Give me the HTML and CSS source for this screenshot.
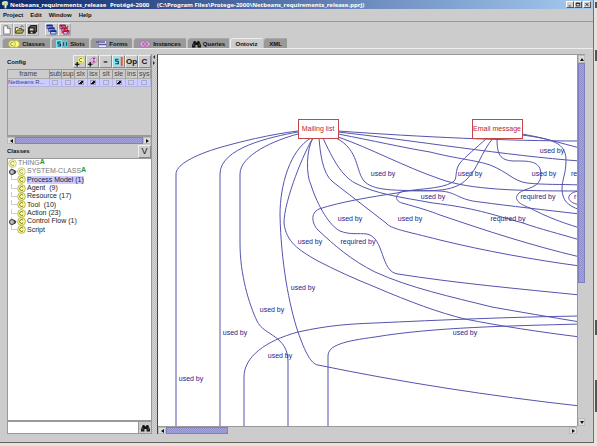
FILE: index.html
```html
<!DOCTYPE html>
<html lang="en">
<head>
<meta charset="utf-8">
<title>Netbeans_requirements_release Protégé-2000</title>
<link rel="stylesheet" href="styles.css">
</head>
<body>
<svg class="defs" aria-hidden="true">
  <symbol id="cls" viewBox="0 0 10 10"><circle cx="5" cy="5" r="4.3" fill="#ffffa0" stroke="#a3a33c" stroke-width=".9"/><path d="M6.9 3.7A2.2 2.2 0 1 0 6.9 6.3" fill="none" stroke="#77771a" stroke-width="1.1"/></symbol>
  <symbol id="find" viewBox="0 0 10 9"><path d="M2 1h2v1.500h2V1h2l2 5v2.500H6.200V5.500H3.800v3H0V6z" fill="#111"/><path d="M2 4v3M8 4v3" stroke="#999" stroke-width=".6"/></symbol>
</svg>
<div class="desktop">
<div class="window">
  <header class="title">
    <svg class="app-icon" viewBox="0 0 9 9"><path d="M4 9V6L1 5V2l2-1.500h3L8 2v3L6 6v3z" fill="#9fd08a"/><path d="M2 2h2v2H2zM5 1h2v2H5zM5 4h1v4H4z" fill="#e9f4c8"/></svg>
    <span class="t-name">Netbeans_requirements_release</span>
    <span class="t-app">Protégé-2000</span>
    <span class="t-path">(C:\Program Files\Protege-2000\Netbeans_requirements_release.pprj)</span>
    <span class="controls">
      <button aria-label="Minimize"><svg viewBox="0 0 8 7"><path d="M2 5.500h3" stroke="#000"/></svg></button>
      <button aria-label="Maximize"><svg viewBox="0 0 8 7"><path d="M1.500 1.500h5v4h-5zM1.500 2h5" fill="none" stroke="#000"/></svg></button>
      <button class="close" aria-label="Close"><svg viewBox="0 0 8 7"><path d="M2 1.500l4 4M6 1.500l-4 4" stroke="#000"/></svg></button>
    </span>
  </header>
  <nav class="menu"><button>Project</button><button>Edit</button><button>Window</button><button>Help</button></nav>
  <div class="toolbar">
    <button aria-label="New"><svg viewBox="0 0 12 12"><path d="M3 2h4l3 3v6H3z" fill="#fff" stroke="#555" stroke-width=".8"/><path d="M7 2v3h3" fill="none" stroke="#555" stroke-width=".8"/><path d="M1 1h2v2" fill="#ee4"/></svg></button>
    <button aria-label="Open"><svg viewBox="0 0 12 12"><path d="M1.500 10V4h3l1 1h3v2" fill="#ffffb0" stroke="#333" stroke-width=".9"/><path d="M1.500 10l2-3.500H11L9 10z" fill="#b5b540" stroke="#333" stroke-width=".9"/><path d="M7 3q2-2 3.500 0" fill="none" stroke="#333" stroke-width=".8"/></svg></button>
    <button aria-label="Save"><svg viewBox="0 0 12 12"><path d="M4 1h7v7L9 10.500H1V4z" fill="#222"/><path d="M3 5h4v2H3zM4 8.500h2V10H4z" fill="#d8d8c0"/><path d="M4 3h5v5" fill="none" stroke="#999" stroke-width=".7"/></svg></button>
    <button class="gap" aria-label="Cascade windows"><svg viewBox="0 0 12 12"><path d="M1 1h6v4H1zM3 4h6v4H3zM5 7h6v4H5z" fill="#c7cdf4" stroke="#223a9c" stroke-width=".9"/><path d="M1 1.800h6M3 4.800h6M5 7.800h6" stroke="#1a2a88" stroke-width="1.600"/></svg></button>
    <button aria-label="Close windows"><svg viewBox="0 0 12 12"><path d="M1 1h6v4H1zM3 4h6v4H3zM5 7h6v4H5z" fill="#c7cdf4" stroke="#a0204c" stroke-width=".9"/><path d="M1 1.800h6M3 4.800h6M5 7.800h6" stroke="#a01840" stroke-width="1.600"/><path d="M3 10l7-8M2 2l8 8" stroke="#d02040" stroke-width="1.200"/></svg></button>
  </div>
  <div class="tabs" role="tablist">
    <button role="tab" class="w1"><svg class="tab-icon" viewBox="0 0 12 8"><circle cx="8" cy="4" r="3.400" fill="#ffff8c" stroke="#b5b530"/><circle cx="4" cy="4" r="3.400" fill="#ffffa8" stroke="#b5b530"/><path d="M5.300 2.900A1.600 1.600 0 1 0 5.300 5.100" fill="none" stroke="#80801c" stroke-width=".8"/></svg>Classes</button>
    <button role="tab" class="w2"><svg class="tab-icon" viewBox="0 0 12 8"><path d="M0 0h6v8H0z" fill="#7fe5ee"/><path d="M4.700 2H2v2h2.500v2H1.500" fill="none" stroke="#035" stroke-width="1.100"/><path d="M7.500 0v8M10.500 0v8" stroke="#4fd4e0" stroke-width="1.800"/><path d="M7.500 2v4M10.500 2v4" stroke="#068"/></svg>Slots</button>
    <button role="tab" class="w3"><svg class="tab-icon" viewBox="0 0 12 8"><path d="M3.500.5h8v7h-8z" fill="#e6e6f4" stroke="#7777a8" stroke-width=".7"/><path d="M1 2h9M3.500 4.500h8" stroke="#5c5ca5" stroke-width="1.400"/></svg>Forms</button>
    <button role="tab" class="w4"><svg class="tab-icon" viewBox="0 0 12 8"><path d="M8 .5L11.500 4 8 7.500 4.500 4zM4 .5L7.500 4 4 7.500.5 4z" fill="#f3b7ef" stroke="#a85aa4" stroke-width=".8"/><path d="M4 2.500v3M8 2.500v3" stroke="#739"/></svg>Instances</button>
    <button role="tab" class="w5"><svg class="find-icon"><use href="#find"/></svg>Queries</button>
    <button role="tab" class="w6 active" aria-selected="true">Ontoviz</button>
    <button role="tab" class="w7">XML</button>
  </div>
  <main class="work">
    <section class="side">
      <div class="head">
        <h2>Config</h2>
        <button aria-label="Add class"><svg viewBox="0 0 12 12"><circle cx="7.500" cy="4.500" r="3.800" fill="#ffff9c" stroke="#c2c240" stroke-width=".8"/><path d="M9 3.300A1.900 1.900 0 1 0 9 5.700" fill="none" stroke="#77771a"/><path d="M1 9h5M3.500 6.500v5" stroke="#000" stroke-width="1.300"/></svg></button>
        <button aria-label="Add instance"><svg viewBox="0 0 12 12"><path d="M7.500.5l4 4-4 4-4-4z" fill="#f6c2f2" stroke="#c07abc" stroke-width=".8"/><path d="M6.200 2.500h2.600M7.500 2.500v4M6.200 6.500h2.600" stroke="#626" stroke-width=".8"/><path d="M1 9h5M3.500 6.500v5" stroke="#000" stroke-width="1.300"/></svg></button>
        <button aria-label="Remove"><svg viewBox="0 0 12 12"><path d="M4 6.500h4" stroke="#000" stroke-width="1.200"/></svg></button>
        <button aria-label="Slots"><svg viewBox="0 0 12 12"><path d="M1 1h6.500v10H1z" fill="#82ecf5"/><path d="M6 3.500H3v2.300h2.800v2.700H2.500" fill="none" stroke="#003a60" stroke-width="1.200"/><path d="M9.500 1v10" stroke="#e2572e" stroke-width="2"/></svg></button>
        <button>Op</button>
        <button>C</button>
      </div>
      <div class="config">
        <table>
          <thead><tr><th class="frame">frame</th><th>sub</th><th>sup</th><th>slx</th><th>isx</th><th>slt</th><th>sle</th><th>ins</th><th>sys</th></tr></thead>
          <tbody><tr><td>Netbeans R...</td>
          <td><input type="checkbox" aria-label="sub"></td><td><input type="checkbox" aria-label="sup"></td><td><input type="checkbox" checked aria-label="slx"></td><td><input type="checkbox" checked aria-label="isx"></td><td><input type="checkbox" aria-label="slt"></td><td><input type="checkbox" checked aria-label="sle"></td><td><input type="checkbox" aria-label="ins"></td><td><input type="checkbox" aria-label="sys"></td></tr></tbody>
        </table>
      </div>
      <div class="hbar"><button class="left" aria-label="Scroll left"></button><span class="thumb full"></span><button class="right" aria-label="Scroll right"></button></div>
      <div class="head classes"><h2>Classes</h2><button>V</button></div>
      <ul class="tree">
        <li class="root"><svg class="node faded"><use href="#cls"/></svg><span class="dim">THING</span><b class="abs">A</b></li>
        <li class="key"><svg class="node faded"><use href="#cls"/></svg><span class="dim">SYSTEM-CLASS</span><b class="abs">A</b></li>
        <li><svg class="node"><use href="#cls"/></svg><span class="picked">Process Model (1)</span></li>
        <li><svg class="node"><use href="#cls"/></svg><span>Agent &nbsp;(9)</span></li>
        <li><svg class="node"><use href="#cls"/></svg><span>Resource (17)</span></li>
        <li><svg class="node"><use href="#cls"/></svg><span>Tool &nbsp;(10)</span></li>
        <li><svg class="node"><use href="#cls"/></svg><span>Action (23)</span></li>
        <li class="key"><svg class="node"><use href="#cls"/></svg><span>Control Flow (1)</span></li>
        <li class="last"><svg class="node"><use href="#cls"/></svg><span>Script</span></li>
      </ul>
      <form class="search"><input type="text" aria-label="Find class"><button type="button" aria-label="Find"><svg class="find-icon"><use href="#find"/></svg></button></form>
    </section>
    <div class="splitter"><svg viewBox="0 0 4 12"><path d="M3 1v4L1 3zM1 7v4l2-2z" fill="#333"/></svg></div>
    <section class="view">
      <svg class="graph">
        <g transform="translate(-158 -55)">
          <g class="edges">
            <path d="M298 131C272 134 238 142 215 149C190 157 176 166 176 174V430"/>
            <path d="M298 132C270 137 220 148 220 174V430"/>
            <path d="M298 134C275 140 240 155 240 174V243C240 275 249 304 257 321C264 336 288 335 288 362V430"/>
            <path d="M311 138C290 150 280 185 280 215C281 262 289 305 298 332C305 352 311 364 318 365C400 382 490 396 580 406"/>
            <path d="M313 138C305 150 284 200 284 223C286 242 299 250 316 260C335 270 355 279 375 287C410 302 440 313 465 319C500 326 540 332 580 337"/>
            <path d="M313 138C306 150 306 175 311 185C318 207 330 226 340 231C350 235 358 233 367 234C385 238 380 272 398 274C455 283 520 289 580 295"/>
            <path d="M319 138C320 150 322 174 333 182L386 223C391 229 405 231 440 240C485 251 535 260 580 266"/>
            <path d="M323 138C333 160 342 176 355 183C375 194 400 197 433 203C475 208 490 214 523 223C540 229 560 234 580 240"/>
            <path d="M336 138C360 150 355 172 365 182C376 192 400 190 440 191C457 192 458 200 480 202C510 206 545 210 580 214"/>
            <path d="M338 137C370 148 405 167 440 179C470 190 520 191 580 191"/>
            <path d="M338 134C375 141 400 147 430 152C458 159 475 160 490 165C508 172 513 181 527 183C545 185 560 184 580 185"/>
            <path d="M338 132C410 140 510 156 580 161"/>
            <path d="M338 131C420 137 510 141 580 141"/>
            <path d="M487 138C475 149 466 156 460 163C454 171 458 179 453 182C440 190 415 188 397 193C370 197 340 202 319 209C310 213 312 224 318 230C334 245 351 260 375 272C410 288 452 297 492 307C520 312 550 317 580 322"/>
            <path d="M493 138C481 153 478 168 467 179C453 194 425 190 404 191C396 193 393 200 402 203C420 208 430 211 440 215C490 232 530 245 580 257"/>
            <path d="M497 138C497 155 500 160 513 161C528 161 541 160 541 175C541 188 525 188 519 193C514 198 516 203 530 208C545 216 560 222 580 228"/>
            <path d="M522 134C545 138 560 143 580 148"/>
            <path d="M522 135C553 139 566 143 566 160C566 175 562 178 562 190C563 201 567 205 580 210"/>
            <path d="M580 191C566 192 564 202 580 205"/>
            <path d="M244 430V377C244 357 265 341 298 332C330 325 350 324 375 323C440 320 510 317 580 316"/>
            <path d="M328 430V356C328 345 345 341 375 337C435 327 510 326 580 324"/>
          </g>
          <g class="frames"><rect x="298.500" y="119.500" width="40" height="19"/><rect x="472.500" y="119.500" width="50" height="19"/></g>
          <g class="titles"><text x="318" y="131">Mailing list</text><text x="497" y="131">Email message</text></g>
          <g class="labels">
            <text x="552" y="153">used by</text>
            <text x="383" y="176">used by</text><text x="470" y="176">used by</text><text x="544" y="176">used by</text><text class="edge" x="571" y="176">re</text>
            <text x="433" y="199">used by</text><text x="538" y="199">required by</text><text class="edge" x="574" y="199">r</text>
            <text x="350" y="221">used by</text><text x="410" y="221">used by</text><text x="508" y="221">required by</text>
            <text x="310" y="244">used by</text><text x="358" y="244">required by</text>
            <text x="303" y="290">used by</text><text x="272" y="312">used by</text><text x="235" y="335">used by</text><text x="465" y="335">used by</text><text x="280" y="358">used by</text><text x="191" y="381">used by</text>
          </g>
        </g>
      </svg>
      <div class="vbar"><button class="up" aria-label="Scroll up"></button><span class="thumb"></span><span class="track"></span><button class="down" aria-label="Scroll down"></button></div>
      <div class="hbar"><button class="left" aria-label="Scroll left"></button><span class="thumb"></span><span class="track"></span><button class="right" aria-label="Scroll right"></button></div>
    </section>
  </main>
</div>
</div>
</body>
</html>
```

FILE: styles.css
```css
* { box-sizing: border-box; }
body { margin: 0; font: 7px/8px "Liberation Sans", Arial, sans-serif; color: #222; }
button, input { font: inherit; color: inherit; margin: 0; padding: 0; border: 0; background: none; border-radius: 0; }
svg { display: block; }
.defs { width: 0; height: 0; position: absolute; }
.desktop { min-height: 100vh; display: flex; padding: 0 3px 3px 0; background: linear-gradient(#555, #555) 100% 2px / 2px 6px no-repeat, linear-gradient(#555, #555) 100% 50px / 2px 11px no-repeat, linear-gradient(#555, #555) 100% 320px / 2px 15px no-repeat, linear-gradient(#555, #555) 100% 380px / 2px 32px no-repeat, #e6e3dc; }
.window { flex: 1; min-width: 0; display: flex; flex-direction: column; background: #ccc; border-right: 1px solid #77706a; border-bottom: 1px solid #66625c; }

.title { display: flex; align-items: center; height: 9px; padding-left: 1px; color: #fff; font: bold 6px/8px "Noto Sans", sans-serif; white-space: nowrap; background: linear-gradient(90deg, #0c276c, #a6caf0); }
.app-icon { width: 8px; height: 9px; margin-right: 1px; }
.t-name { width: 100px; }
.t-app { width: 47px; }
.controls { display: flex; margin-left: auto; padding-right: 2px; }
.controls button { width: 8px; height: 7px; background: #d4d0c8; border: 1px solid; border-color: #fff #555 #555 #fff; }
.controls svg { width: 100%; height: 100%; }
.controls .close { margin-left: 1px; }

.menu { display: flex; gap: 7px; height: 13px; padding-left: 3px; padding-bottom: 1px; align-items: center; border-bottom: 1px solid #999; }
.menu button, h2, .tabs button { font-size: 6px; font-weight: bold; color: #111; }
.toolbar { display: flex; height: 16px; padding: 1px 0; }
.toolbar button { width: 13px; height: 13px; border: 1px solid #aaa; border-left-color: #eee; border-top-color: #eee; padding: 0; }
.toolbar svg { width: 11px; height: 11px; }
.toolbar .gap { margin-left: 6px; }

.tabs { display: flex; height: 11px; padding-left: 2px; gap: 1px; align-items: flex-end; border-bottom: 1px solid #eee; }
.tabs button { display: flex; align-items: center; justify-content: center; gap: 2px; height: 10px; background: #999; border-left: 1px solid #bbb; border-top: 1px solid #aaa; border-top-left-radius: 4px; white-space: nowrap; }
.tabs .active { background: #ccc; border-color: #eee; }
.tab-icon { width: 12px; height: 8px; }
.find-icon { width: 9px; height: 8px; }
.w1 { width: 48px; } .w2 { width: 38px; } .w3 { width: 42px; } .w4 { width: 53px; } .w5 { width: 42px; } .w6 { width: 32px; } .w7 { width: 24px; }

.work { flex: 1; min-height: 0; display: grid; grid-template-columns: 145px 5px 1fr; padding: 5px 8px 8px 7px; }
.side { display: flex; flex-direction: column; min-width: 0; border-right: 1px solid #999; }
.head { display: flex; height: 15px; align-items: center; flex: none; }
.head h2 { margin: 0 auto 0 0; }
.head button { width: 13px; height: 13px; border: 1px solid; border-color: #eee #888 #888 #eee; font-weight: bold; font-size: 8px; color: #111; text-align: center; }
.head svg { width: 11px; height: 11px; }
.config { height: 67px; border: 1px solid #999; border-right: 0; }
table { width: 100%; table-layout: fixed; border-collapse: collapse; }
th, td { padding: 0; height: 8px; line-height: 7px; font-weight: normal; color: #444; text-align: center; white-space: nowrap; border-right: 1px solid #999; border-bottom: 1px solid #aaa; }
.frame { width: 41px; }
td { background: #ccccff; color: #446; border-color: #b4b4dd; }
td:first-child { text-align: left; font-size: 6px; }
td input { appearance: none; display: block; width: 6px; height: 5px; margin: 0 auto; border: 1px solid #aaaacc; }
td input:checked { border-color: #9999bb; background: linear-gradient(135deg, transparent 40%, #111 40%, #111 75%, transparent 75%); }

.hbar { display: flex; height: 8px; flex: none; background: #ccc; border-top: 1px solid #999; }
.hbar button { width: 8px; flex: none; background: #ddd; border: 1px solid #bbb; display: grid; place-items: center; }
.hbar button::before, .vbar button::before { content: ""; border: 2px solid transparent; }
.hbar .left::before { border-right: 3px solid #111; border-left: 0; }
.hbar .right::before { border-left: 3px solid #111; border-right: 0; }
.vbar .up::before { border-bottom: 3px solid #111; border-top: 0; }
.vbar .down::before { border-top: 3px solid #111; border-bottom: 0; }
.thumb { background: repeating-conic-gradient(#8f8fce 0 25%, #a5a5dc 0 50%) 0 0 / 2px 2px; border: 1px solid #8080bd; }
.hbar .full { flex: 1; }
.classes { height: 14px; }
.classes button { font-size: 9px; font-weight: normal; }

.tree { flex: 1; list-style: none; margin: 0; padding: 0; background: #fff; border: 1px solid #999; border-right: 0; }
.tree li { position: relative; display: flex; align-items: center; height: 8px; margin-left: 9px; white-space: nowrap; }
.tree li:nth-child(3n) { height: 9px; }
.tree .root { margin-left: 0; }
.tree li:not(.root)::before { content: ""; position: absolute; left: -6px; top: 0; width: 6px; height: 4px; border-left: 1px solid #ccd; border-bottom: 1px solid #ccd; }
.tree .key::after { content: ""; position: absolute; left: -8px; top: 2px; width: 4px; height: 4px; border: 1px solid #333; border-radius: 50%; background: #bbc; box-shadow: 2px 0 0 -1px #333; }
.node { width: 9px; height: 9px; margin-right: 1px; flex: none; }
.faded { opacity: .7; }
.dim { color: #777; }
.picked { background: #ccccff; }
.abs { color: #1a9c33; font-size: 7px; line-height: 6px; align-self: flex-start; }
.search { display: flex; height: 13px; flex: none; border: 1px solid #999; border-right: 0; }
.search input { flex: 1; min-width: 0; background: #fff; outline: 0; }
.search button { width: 13px; border-left: 1px solid #999; display: grid; place-items: center; }

.splitter { background: repeating-conic-gradient(#bbb 0 25%, #d8d8d8 0 50%) 0 0 / 2px 2px; }
.splitter svg { width: 4px; height: 12px; }
.view { display: grid; grid-template: 1fr 8px / 1fr 8px; border-left: 1px solid #444; border-top: 1px solid #999; min-width: 0; min-height: 0; }
.graph { width: 100%; height: 100%; min-height: 0; background: #fff; overflow: hidden; }
.edges { fill: none; stroke: #5454b0; stroke-width: 1; }
.frames { fill: #fff; stroke: #c04848; }
.titles, .labels { font-size: 7px; text-anchor: middle; }
.titles { fill: #bb2626; }
.labels { fill: #24248c; }
.labels .edge { text-anchor: start; }
.vbar { display: flex; flex-direction: column; border-left: 1px solid #999; }
.vbar button { height: 8px; flex: none; display: grid; place-items: center; background: #ddd; border: 1px solid #bbb; }
.vbar .thumb { flex: 220; }
.vbar .track { flex: 136; }
.view .hbar .thumb { flex: 60; }
.view .hbar .track { flex: 344; }
```
